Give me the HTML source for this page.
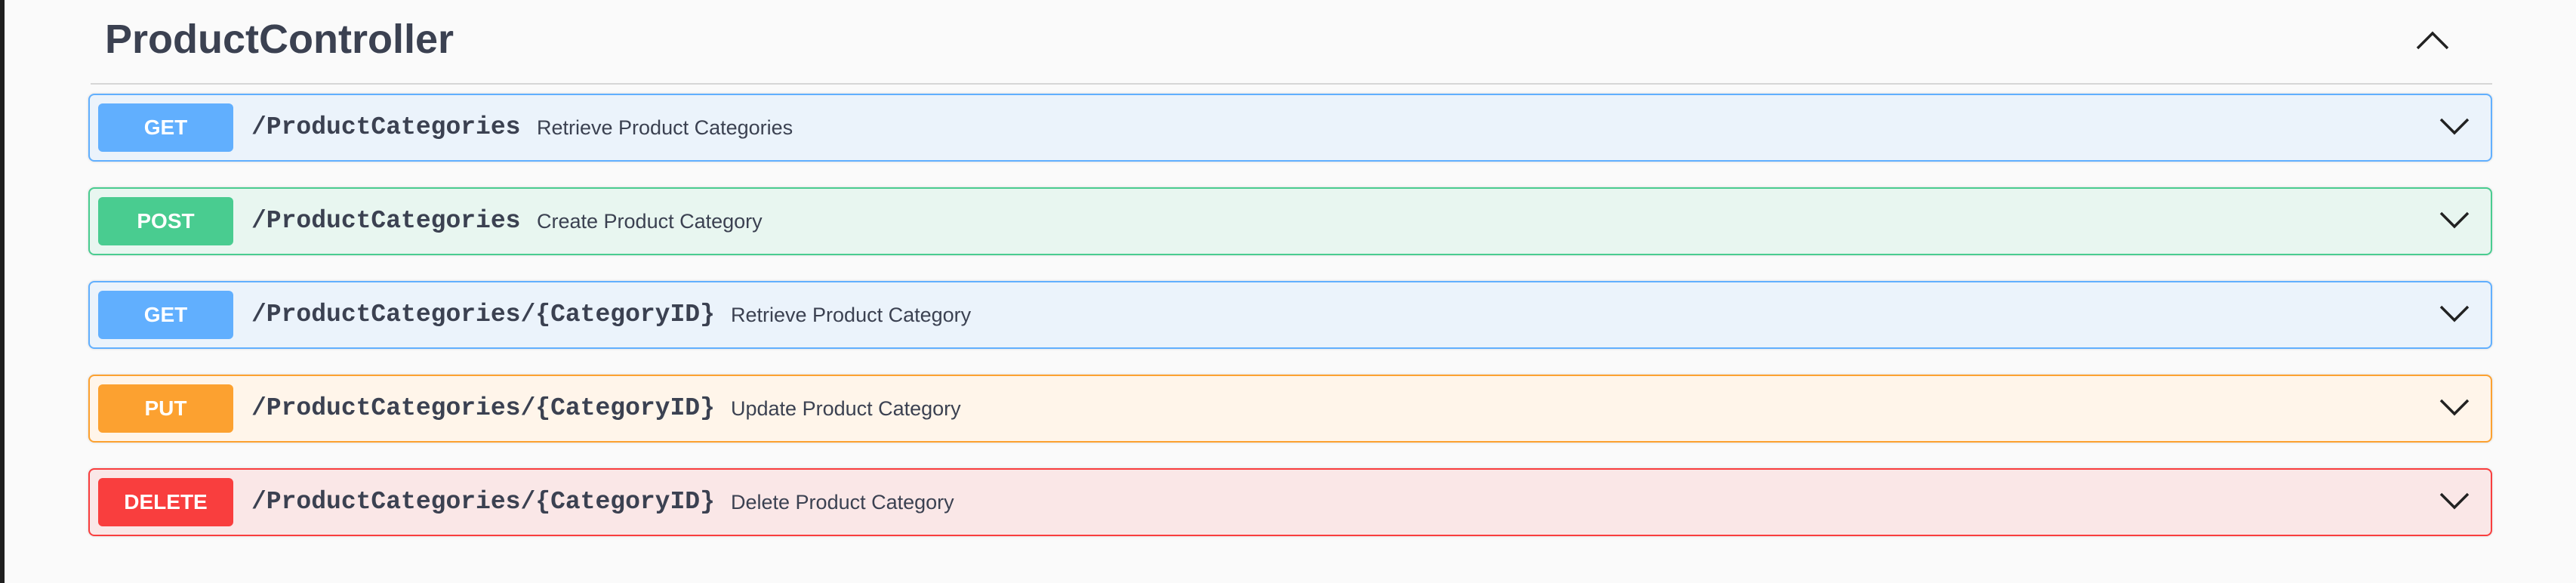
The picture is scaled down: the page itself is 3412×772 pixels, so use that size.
<!DOCTYPE html>
<html><head><meta charset="utf-8"><style>
*{margin:0;padding:0;box-sizing:border-box}
html,body{width:3412px;height:772px;overflow:hidden;background:#fafafa;position:relative;font-family:"Liberation Sans",sans-serif;color:#3b4151}
.strip{position:absolute;left:0;top:0;width:6px;height:772px;background:#1f1f1f}
.title{position:absolute;left:139px;top:20px;font-size:54px;font-weight:bold;line-height:64px}
.sep{position:absolute;left:120px;top:110px;width:3181px;height:2px;background:#d6d6d6}
.row{position:absolute;left:117px;width:3184px;height:90px;border:2px solid;border-radius:8px;box-shadow:0 0 3px rgba(0,0,0,.15)}
.btn{position:absolute;left:11px;top:11px;width:179px;height:64px;border-radius:6px;color:#fff;font-weight:bold;font-size:28px;line-height:64px;text-align:center}
.path{position:absolute;left:214px;top:0;line-height:86px;font-family:"Liberation Mono",monospace;font-weight:bold;font-size:33px;color:#3b4151}
.desc{position:absolute;top:0;line-height:86px;font-size:27px;color:#3b4151}
.chev{position:absolute;right:26px;top:26px}
</style></head><body>
<div class="strip"></div>
<div class="title">ProductController</div>
<svg style="position:absolute;left:3198px;top:36px" width="48" height="32"><polyline points="4,28 24,8 44,28" fill="none" stroke="#222" stroke-width="3.5"/></svg>
<div class="sep"></div>

<div class="row" style="top:124px;background:#ebf3fb;border-color:#61affe">
<div class="btn" style="background:#61affe">GET</div>
<div class="path">/ProductCategories</div>
<div class="desc" style="left:592px">Retrieve Product Categories</div>
<svg class="chev" width="44" height="32"><polyline points="4,6 22,24 40,6" fill="none" stroke="#222" stroke-width="3.5"/></svg>
</div>

<div class="row" style="top:248px;background:#e8f6f0;border-color:#49cc90">
<div class="btn" style="background:#49cc90">POST</div>
<div class="path">/ProductCategories</div>
<div class="desc" style="left:592px">Create Product Category</div>
<svg class="chev" width="44" height="32"><polyline points="4,6 22,24 40,6" fill="none" stroke="#222" stroke-width="3.5"/></svg>
</div>

<div class="row" style="top:372px;background:#ebf3fb;border-color:#61affe">
<div class="btn" style="background:#61affe">GET</div>
<div class="path">/ProductCategories/{CategoryID}</div>
<div class="desc" style="left:849px">Retrieve Product Category</div>
<svg class="chev" width="44" height="32"><polyline points="4,6 22,24 40,6" fill="none" stroke="#222" stroke-width="3.5"/></svg>
</div>

<div class="row" style="top:496px;background:#fff5ea;border-color:#fca130">
<div class="btn" style="background:#fca130">PUT</div>
<div class="path">/ProductCategories/{CategoryID}</div>
<div class="desc" style="left:849px">Update Product Category</div>
<svg class="chev" width="44" height="32"><polyline points="4,6 22,24 40,6" fill="none" stroke="#222" stroke-width="3.5"/></svg>
</div>

<div class="row" style="top:620px;background:#fae7e7;border-color:#f93e3e">
<div class="btn" style="background:#f93e3e">DELETE</div>
<div class="path">/ProductCategories/{CategoryID}</div>
<div class="desc" style="left:849px">Delete Product Category</div>
<svg class="chev" width="44" height="32"><polyline points="4,6 22,24 40,6" fill="none" stroke="#222" stroke-width="3.5"/></svg>
</div>
</body></html>
